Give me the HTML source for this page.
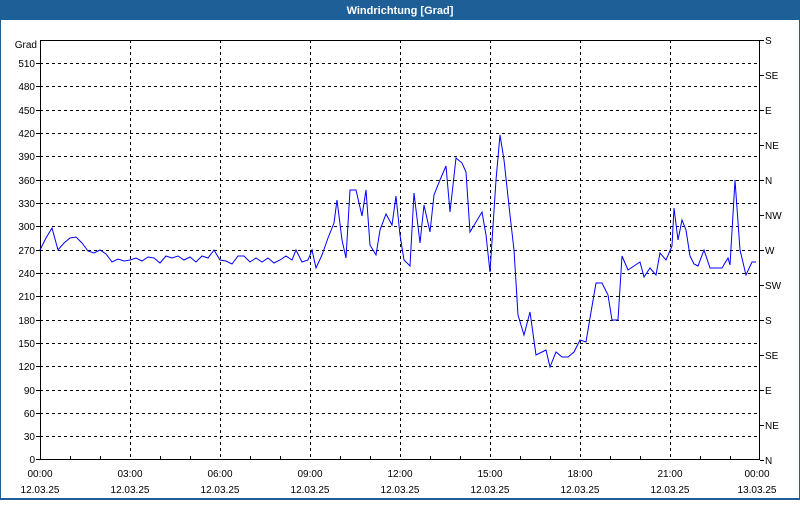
<!DOCTYPE html>
<html><head><style>
body{margin:0;width:800px;height:500px;overflow:hidden;background:#fff;font-family:"Liberation Sans",sans-serif}
</style></head><body>
<svg width="800" height="500" xmlns="http://www.w3.org/2000/svg" font-family="Liberation Sans, sans-serif" font-size="10">
<rect x="0" y="0" width="800" height="500" fill="#1e5f98"/>
<rect x="1" y="20" width="798" height="478" fill="#fff"/>
<text x="400" y="14" fill="#fff" font-weight="bold" font-size="11" text-anchor="middle">Windrichtung [Grad]</text>
<g stroke="#000" stroke-dasharray="3,3" stroke-width="1">
<line x1="40" x2="760" y1="63.5" y2="63.5"/><line x1="40" x2="760" y1="86.5" y2="86.5"/><line x1="40" x2="760" y1="110.5" y2="110.5"/><line x1="40" x2="760" y1="133.5" y2="133.5"/><line x1="40" x2="760" y1="156.5" y2="156.5"/><line x1="40" x2="760" y1="180.5" y2="180.5"/><line x1="40" x2="760" y1="203.5" y2="203.5"/><line x1="40" x2="760" y1="226.5" y2="226.5"/><line x1="40" x2="760" y1="250.5" y2="250.5"/><line x1="40" x2="760" y1="273.5" y2="273.5"/><line x1="40" x2="760" y1="296.5" y2="296.5"/><line x1="40" x2="760" y1="320.5" y2="320.5"/><line x1="40" x2="760" y1="343.5" y2="343.5"/><line x1="40" x2="760" y1="366.5" y2="366.5"/><line x1="40" x2="760" y1="390.5" y2="390.5"/><line x1="40" x2="760" y1="413.5" y2="413.5"/><line x1="40" x2="760" y1="436.5" y2="436.5"/>
<line y1="40" y2="460" x1="130.5" x2="130.5"/><line y1="40" y2="460" x1="220.5" x2="220.5"/><line y1="40" y2="460" x1="310.5" x2="310.5"/><line y1="40" y2="460" x1="400.5" x2="400.5"/><line y1="40" y2="460" x1="490.5" x2="490.5"/><line y1="40" y2="460" x1="580.5" x2="580.5"/><line y1="40" y2="460" x1="670.5" x2="670.5"/>
</g>
<rect x="40.5" y="40.5" width="719" height="419" fill="none" stroke="#000"/>
<g stroke="#000">
<path d="M760 40.5h4M760 75.5h4M760 110.5h4M760 145.5h4M760 180.5h4M760 215.5h4M760 250.5h4M760 285.5h4M760 320.5h4M760 355.5h4M760 390.5h4M760 425.5h4M760 460.5h4"/>
<path d="M36 63.5h4M36 86.5h4M36 110.5h4M36 133.5h4M36 156.5h4M36 180.5h4M36 203.5h4M36 226.5h4M36 250.5h4M36 273.5h4M36 296.5h4M36 320.5h4M36 343.5h4M36 366.5h4M36 390.5h4M36 413.5h4M36 436.5h4M36 459.5h4"/>
<path d="M70.5 456v4M100.5 456v4M160.5 456v4M190.5 456v4M250.5 456v4M280.5 456v4M340.5 456v4M370.5 456v4M430.5 456v4M460.5 456v4M520.5 456v4M550.5 456v4M610.5 456v4M640.5 456v4M700.5 456v4M730.5 456v4"/>
</g>
<g text-anchor="end" fill="#000">
<text x="37" y="48">Grad</text>
<text x="35" y="67">510</text><text x="35" y="90">480</text><text x="35" y="114">450</text><text x="35" y="137">420</text><text x="35" y="160">390</text><text x="35" y="184">360</text><text x="35" y="207">330</text><text x="35" y="230">300</text><text x="35" y="254">270</text><text x="35" y="277">240</text><text x="35" y="300">210</text><text x="35" y="324">180</text><text x="35" y="347">150</text><text x="35" y="370">120</text><text x="35" y="394">90</text><text x="35" y="417">60</text><text x="35" y="440">30</text><text x="35" y="463">0</text>
</g>
<g fill="#000">
<text x="765" y="44">S</text><text x="765" y="79">SE</text><text x="765" y="114">E</text><text x="765" y="149">NE</text><text x="765" y="184">N</text><text x="765" y="219">NW</text><text x="765" y="254">W</text><text x="765" y="289">SW</text><text x="765" y="324">S</text><text x="765" y="359">SE</text><text x="765" y="394">E</text><text x="765" y="429">NE</text><text x="765" y="464">N</text>
</g>
<g text-anchor="middle" fill="#000">
<text x="40" y="477">00:00</text><text x="130" y="477">03:00</text><text x="220" y="477">06:00</text><text x="310" y="477">09:00</text><text x="400" y="477">12:00</text><text x="490" y="477">15:00</text><text x="580" y="477">18:00</text><text x="670" y="477">21:00</text><text x="757" y="477">00:00</text>
<text x="40" y="493">12.03.25</text><text x="130" y="493">12.03.25</text><text x="220" y="493">12.03.25</text><text x="310" y="493">12.03.25</text><text x="400" y="493">12.03.25</text><text x="490" y="493">12.03.25</text><text x="580" y="493">12.03.25</text><text x="670" y="493">12.03.25</text><text x="757" y="493">13.03.25</text>
</g>
<polyline fill="none" stroke="#0000ff" stroke-width="1" points="40,250 46,238 52,228 58,250 64,243 70,238 76,237 82,243 88,251 94,253 100,250 106,254 112,262 118,259 124,261 130,260 136,258 142,261 148,257 154,258 160,263 166,256 172,258 178,256 184,260 190,257 196,262 202,256 208,258 214,250 220,260 226,261 232,264 238,256 244,256 250,262 256,258 262,262 268,258 274,263 280,260 286,256 292,260 296,250 302,262 308,260 312,250 316,268 322,255 328,238 334,223 337,200 342,240 346,258 350,190 356,190 362,216 366,190 370,245 376,255 380,230 386,214 392,225 396,196 400,235 404,260 410,266 414,193 420,243 424,205 430,232 434,195 440,180 446,166 450,212 456,158 462,163 466,172 470,232 476,222 482,212 486,235 490,272 496,180 500,135 504,160 510,215 514,250 518,315 524,335 530,312 536,355 542,352 546,350 550,367 556,352 562,357 568,357 574,352 580,340 586,342 590,318 596,283 602,283 608,295 612,320 618,320 622,256 628,270 634,266 640,262 644,277 650,268 656,275 660,253 666,260 672,246 674,208 678,240 682,220 686,230 690,256 694,264 698,266 704,250 710,268 716,268 722,268 728,258 730,265 735,180 740,250 746,275 752,262 756,262"/>
</svg>
</body></html>
